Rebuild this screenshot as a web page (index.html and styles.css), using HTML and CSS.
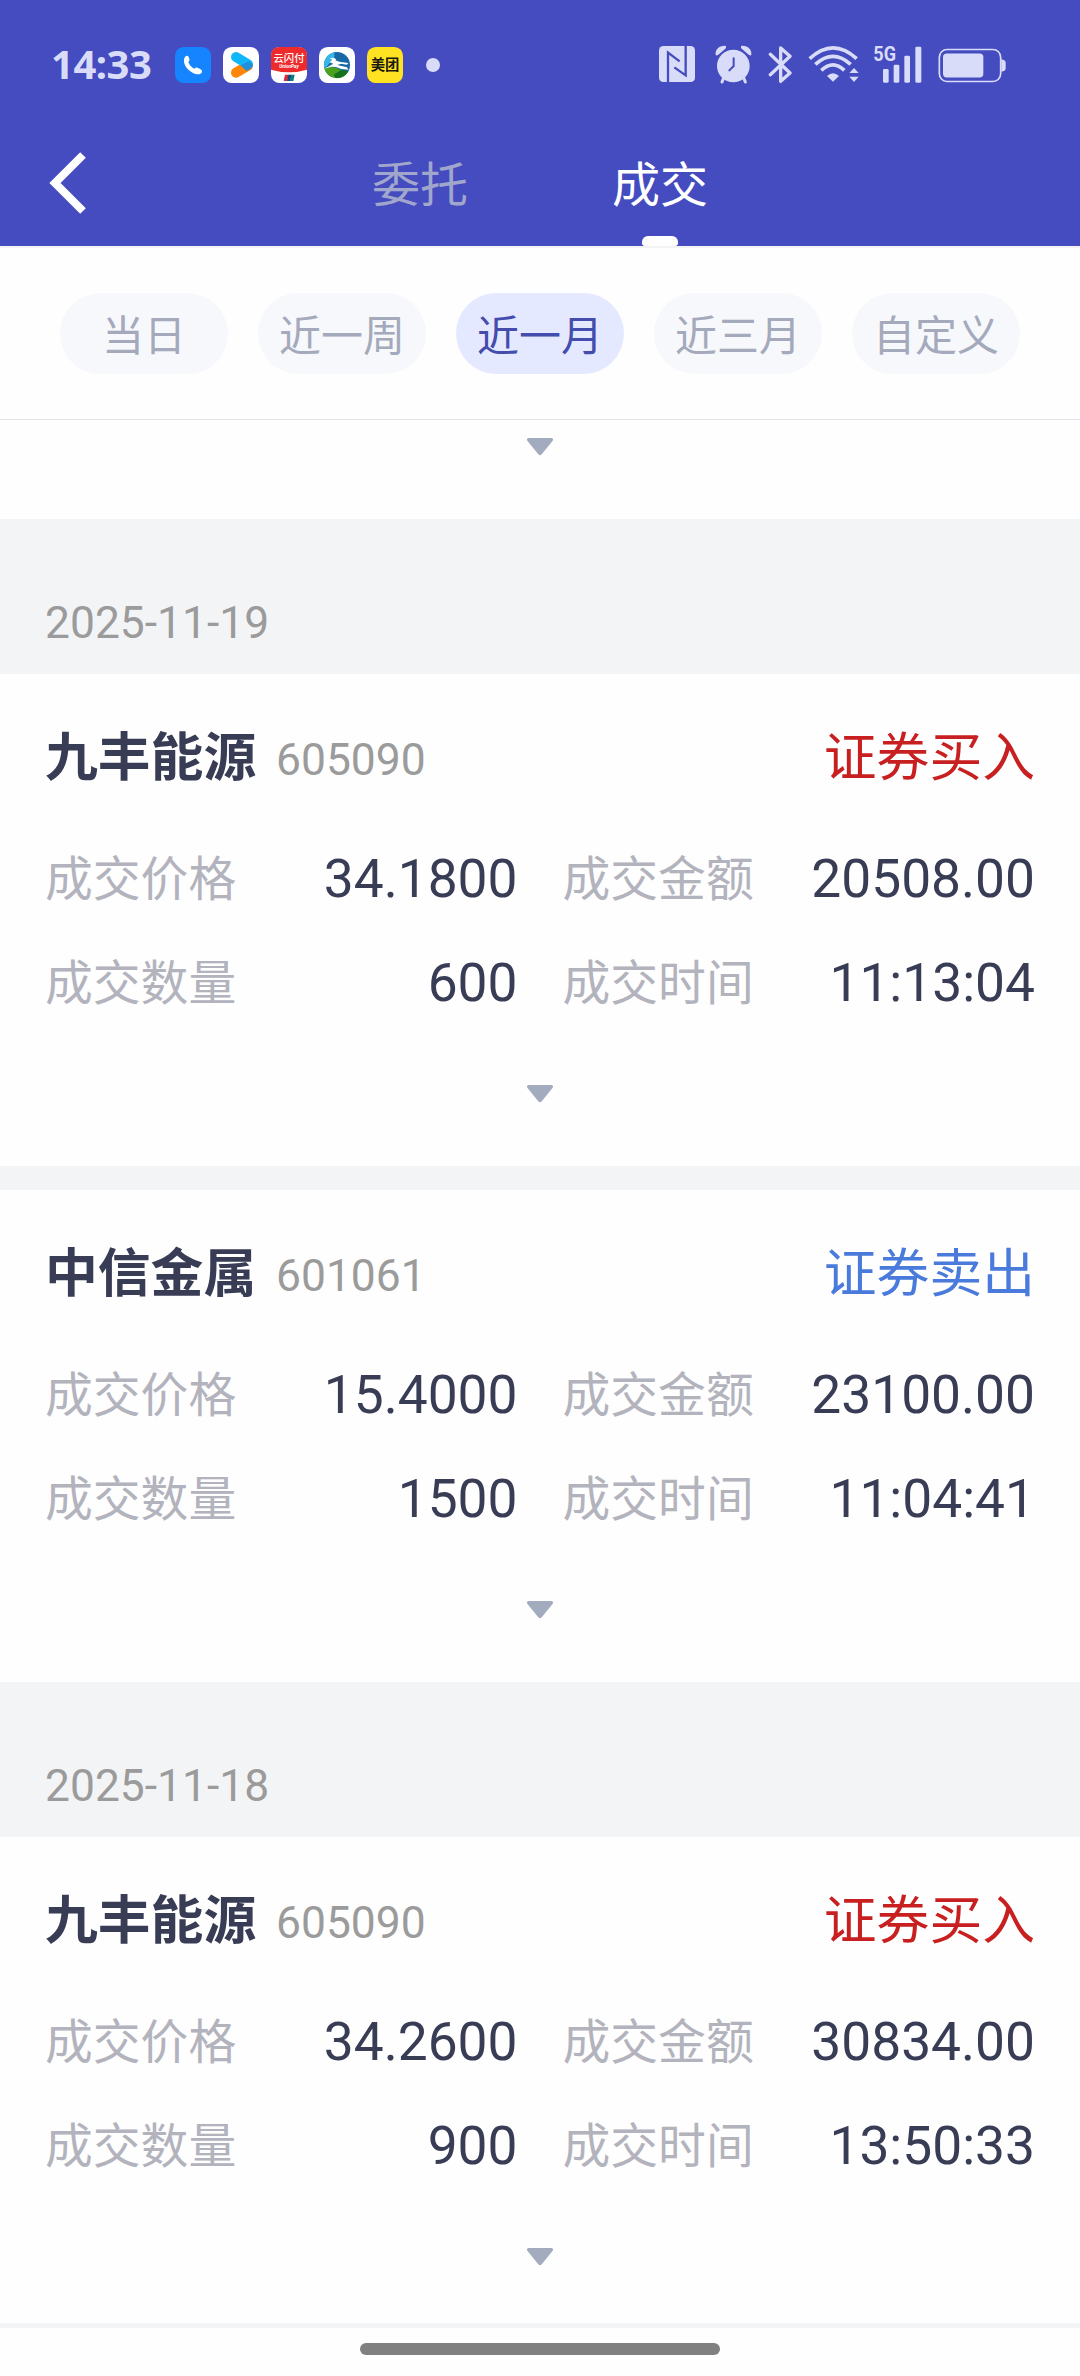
FILE: index.html
```html
<!DOCTYPE html>
<html lang="zh-CN">
<head>
<meta charset="utf-8">
<meta name="viewport" content="width=device-width, initial-scale=1">
<title>成交</title>
<link rel="stylesheet" href="styles.css">
</head>
<body>
<div class="screen">
  <header class="header">
    <div class="status">
      <span class="clock">14:33</span>
      <div class="apps">
        <svg viewBox="0 0 108 108"><rect width="108" height="108" rx="26" fill="#1684ff"/><path d="M30 30c5-6 10-4 12 3 3 6 1 9-2 12 4 10 9 15 18 20 4-4 8-4 13-1 8 4 13 7 9 13-6 7-16 6-26 1C38 69 28 57 27 43c0-5 0-9 3-13z" fill="#fff"/></svg>
        <svg viewBox="0 0 108 108"><rect width="108" height="108" rx="26" fill="#fff"/><path d="M39 77 75 56" stroke="#ff8608" stroke-width="30" stroke-linecap="round"/><path d="M39 30 75 52" stroke="#10b6fa" stroke-width="30" stroke-linecap="round"/><path d="M53 55 78 42 90 54 82 66 70 72z" fill="#218fd9"/></svg>
        <svg viewBox="0 0 108 108"><rect width="108" height="108" rx="26" fill="#fff"/><path d="M0 68V26Q0 0 26 0H82Q108 0 108 26V68Q54 84 0 68z" fill="#ed2b2b"/><text x="54" y="44" class="pay-name">云闪付</text><text x="54" y="64" class="pay-sub">UnionPay</text><path d="M42 83H53L49 102H38z" fill="#d92a38"/><path d="M52 83H62L58 102H48z" fill="#174577"/><path d="M61 83H71L67 102H57z" fill="#087c83"/></svg>
        <svg viewBox="0 0 108 108"><rect width="108" height="108" rx="26" fill="#fff"/><circle cx="54" cy="54" r="39" fill="#1768a4"/><path d="M15 54A39 39 0 0 1 44 16Q51 27 40 39L27 54 17 66z" fill="#35b8e8"/><path d="M16 64Q43 54 64 68 76 76 88 73A39 39 0 0 1 16 64z" fill="#49a11e"/><path d="M44 83 66 69 88 72A39 39 0 0 1 50 93z" fill="#14721e"/><path d="M32 34Q47 29 51 37 45 41 65 45L88 48 84 53 66 50 55 54 84 61 88 68 67 66 51 60 37 59 17 65 35 55 43 50 32 46 40 38z" fill="#fff"/></svg>
        <svg viewBox="0 0 108 108"><rect width="108" height="108" rx="26" fill="#ffe322"/><text x="54" y="70" class="mt-name">美团</text></svg>
      </div>
      <i class="dot"></i>
      <svg class="nfc" viewBox="57 48 108 108"><rect x="57" y="48" width="108" height="108" rx="13" fill="#d9dcf8"/><path d="M84 156V68L119 94M137 48V136L103 112" fill="none" stroke="#444cbf" stroke-width="7"/></svg>
      <svg class="alarm" viewBox="225 43 111 117" fill="#d9dcf8"><circle cx="280" cy="106" r="49"/><path d="M227 73C225 56 237 44 256 45 259 47 259 51 256 54L235 72Q230 76 227 73zM334 73C336 56 324 44 305 45 302 47 302 51 305 54L326 72Q331 76 334 73z"/><path d="M251 141 246 154M311 141 316 154" stroke="#d9dcf8" stroke-width="9" stroke-linecap="round"/><path d="M281 83V106L268 119" fill="none" stroke="#444cbf" stroke-width="6" stroke-linecap="round"/></svg>
      <svg class="bt" viewBox="385 43 75 117"><path d="M392 71 451 127 423 152V52L451 77 392 132" fill="none" stroke="#d9dcf8" stroke-width="10" stroke-linejoin="round" stroke-linecap="round"/></svg>
      <svg class="wifi" viewBox="504 43 156 114" fill="none" stroke="#d9dcf8" stroke-width="11"><path d="M509 84Q579 19 650 84M526 101Q579 53 632 101M544 119Q579 86 613 119"/><path d="M561 136Q579 119 597 136L579 153zM628 127 642 112 656 127zM628 138H656L642 154z" fill="#d9dcf8" stroke="none"/></svg>
      <svg class="signal" viewBox="698 28 147 129" fill="#d9dcf8"><text x="699" y="92" class="net" textLength="68" lengthAdjust="spacingAndGlyphs">5G</text><rect x="728" y="115" width="17" height="41" rx="4"/><rect x="760" y="102" width="17" height="54" rx="4"/><rect x="792" y="75" width="17" height="81" rx="4"/><rect x="825" y="48" width="18" height="108" rx="4"/></svg>
      <svg class="battery" viewBox="893 53 204 104"><rect x="897" y="57" width="184" height="96" rx="23" fill="none" stroke="#d9dcf8" stroke-width="5"/><rect x="908" y="69" width="121" height="72" rx="11" fill="#d9dcf8"/><path d="M1083 86Q1096 88 1096 97V114Q1096 122 1083 124z" fill="#d9dcf8"/></svg>
    </div>
    <nav class="nav">
      <svg class="back" viewBox="0 0 38 64"><path d="M34 4 6 32 34 60" fill="none" stroke="#fff" stroke-width="8"/></svg>
      <div class="tabs"><span class="tab">委托</span><span class="tab tab-on">成交</span></div>
    </nav>
  </header>

  <div class="filters">
    <span class="chip">当日</span><span class="chip">近一周</span><span class="chip chip-on">近一月</span><span class="chip">近三月</span><span class="chip">自定义</span>
  </div>

  <main class="list">
    <div class="tail"><svg class="caret" viewBox="0 0 28 18"><path d="M2.500 0H25.500Q28 .5 26.500 3L15.500 16.500Q14 18 12.500 16.500L1.500 3Q0 .5 2.500 0z"/></svg></div>

    <div class="date">2025-11-19</div>
    <article class="card">
      <div class="title"><b class="name">九丰能源</b><span class="code">605090</span><span class="side buy">证券买入</span></div>
      <dl class="facts">
        <div class="fact"><dt>成交价格</dt><dd>34.1800</dd></div><div class="fact"><dt>成交金额</dt><dd>20508.00</dd></div>
        <div class="fact"><dt>成交数量</dt><dd>600</dd></div><div class="fact"><dt>成交时间</dt><dd>11:13:04</dd></div>
      </dl>
      <svg class="caret" viewBox="0 0 28 18"><path d="M2.500 0H25.500Q28 .5 26.500 3L15.500 16.500Q14 18 12.500 16.500L1.500 3Q0 .5 2.500 0z"/></svg>
    </article>
    <div class="gap"></div>
    <article class="card">
      <div class="title"><b class="name">中信金属</b><span class="code">601061</span><span class="side sell">证券卖出</span></div>
      <dl class="facts">
        <div class="fact"><dt>成交价格</dt><dd>15.4000</dd></div><div class="fact"><dt>成交金额</dt><dd>23100.00</dd></div>
        <div class="fact"><dt>成交数量</dt><dd>1500</dd></div><div class="fact"><dt>成交时间</dt><dd>11:04:41</dd></div>
      </dl>
      <svg class="caret" viewBox="0 0 28 18"><path d="M2.500 0H25.500Q28 .5 26.500 3L15.500 16.500Q14 18 12.500 16.500L1.500 3Q0 .5 2.500 0z"/></svg>
    </article>

    <div class="date">2025-11-18</div>
    <article class="card">
      <div class="title"><b class="name">九丰能源</b><span class="code">605090</span><span class="side buy">证券买入</span></div>
      <dl class="facts">
        <div class="fact"><dt>成交价格</dt><dd>34.2600</dd></div><div class="fact"><dt>成交金额</dt><dd>30834.00</dd></div>
        <div class="fact"><dt>成交数量</dt><dd>900</dd></div><div class="fact"><dt>成交时间</dt><dd>13:50:33</dd></div>
      </dl>
      <svg class="caret" viewBox="0 0 28 18"><path d="M2.500 0H25.500Q28 .5 26.500 3L15.500 16.500Q14 18 12.500 16.500L1.500 3Q0 .5 2.500 0z"/></svg>
    </article>
  </main>
  <footer class="home"><i class="home-bar"></i></footer>
</div>
</body>
</html>
```
FILE: styles.css
```css
* { box-sizing: border-box; margin: 0; padding: 0; }
body { background: #fefefe; font-family: Roboto, "Noto Sans CJK SC", sans-serif; color: #383c55; }
svg { display: block; flex: none; }
.screen { width: 1080px; height: 2376px; display: flex; flex-direction: column; overflow: hidden; }

.header { height: 246px; background: #444cbf; flex: none; }
.status { height: 122px; padding: 8px 0 0 51px; display: flex; align-items: center; }
.clock { width: 124px; margin-top: -3px; font: 700 40px/40px "Noto Sans", sans-serif; letter-spacing: -0.5px; color: #d9dcf8; }
.apps { display: flex; gap: 12px; }
.apps svg { width: 36px; height: 36px; }
.pay-name { font: 500 31px "Noto Sans CJK SC", sans-serif; fill: #fff; text-anchor: middle; }
.pay-sub { font: italic 700 14px Roboto, sans-serif; fill: #fff; text-anchor: middle; }
.mt-name { font: 700 43px "Noto Sans CJK SC", sans-serif; fill: #1c1a10; text-anchor: middle; }
.dot { width: 14px; height: 14px; margin-left: 23px; border-radius: 50%; background: #d9dcf8; }
.nfc { width: 36px; height: 36px; margin: -2px 0 0 219px; }
.alarm { width: 37px; height: 39px; margin: -2px 0 0 20px; }
.bt { width: 25px; height: 39px; margin: -2px 0 0 16px; }
.wifi { width: 52px; height: 38px; margin: -3px 0 0 15px; }
.signal { width: 49px; height: 43px; margin: -8px 0 0 13px; }
.net { font: 700 60px Roboto, sans-serif; }
.battery { width: 68px; height: 35px; margin-left: 16px; }

.nav { height: 124px; display: flex; align-items: center; }
.back { width: 38px; height: 64px; margin: -3px 0 0 49px; }
.tabs { height: 124px; display: flex; margin-left: 285px; gap: 144px; }
.tab { width: 96px; height: 124px; font-size: 48px; line-height: 128px; color: #a1a6cc; white-space: nowrap; }
.tab-on { color: #fff; position: relative; }
.tab-on::after { content: ""; position: absolute; left: 30px; bottom: 0; width: 36px; height: 10px; border-radius: 6px 6px 3px 3px; background: #fff; }

.filters { height: 174px; flex: none; display: flex; gap: 30px; padding: 45px 60px 0; border-top: 2px solid #f3f3f6; border-bottom: 1px solid #e2e2e4; }
.chip { width: 168px; height: 81px; border-radius: 41px; background: #f7f8fc; color: #a4aabb; font-size: 42px; line-height: 87px; text-align: center; white-space: nowrap; }
.chip-on { background: #e5e9ff; color: #444cac; }

.list { flex: none; height: 1903px; overflow: hidden; }
.caret { width: 28px; height: 18px; margin: 0 auto; fill: #a3abbf; }
.tail { height: 99px; padding-top: 18px; }
.date { height: 155px; padding: 74px 45px 0; background: #f3f4f6; color: #9b9b9b; font-size: 44.4px; line-height: 60px; }
.gap { height: 24px; background: #f3f4f6; }
.card { height: 492px; padding: 47px 45px 0; }
.title { display: flex; height: 70px; line-height: 75px; white-space: nowrap; }
.name { width: 213px; font-size: 52.8px; font-weight: 700; }
.code { margin: 2px 0 0 18px; font-size: 44.4px; color: #9b9b9b; }
.side { margin-left: auto; font-size: 52.8px; }
.buy { color: #c82020; }
.sell { color: #4a7adb; }
.facts { display: grid; grid-template-columns: 1fr 1fr; column-gap: 45px; grid-auto-rows: 104px; padding-top: 34px; height: 294px; }
.fact { display: flex; justify-content: space-between; height: 104px; white-space: nowrap; }
.fact dt { font-size: 47.8px; line-height: 110px; color: #b2b3bd; }
.fact dd { font-size: 53.3px; line-height: 108px; }

.home { flex: none; height: 53px; border-top: 5px solid #f3f4f6; padding-top: 15px; }
.home-bar { display: block; width: 360px; height: 12px; margin: 0 auto; border-radius: 6px; background: #808080; }
```
